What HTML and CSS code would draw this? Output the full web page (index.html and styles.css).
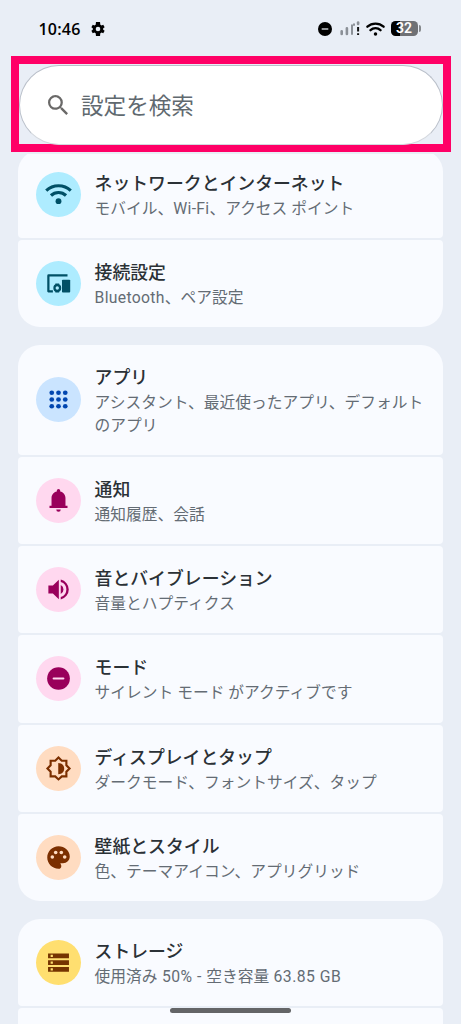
FILE: index.html
```html
<!DOCTYPE html>
<html lang="ja">
<head>
<meta charset="utf-8">
<title>設定</title>
<link rel="stylesheet" href="styles.css">
</head>
<body>
<div class="screen">
  <header class="top">
    <div class="status">
      <span class="clock">10:46</span>
      <svg class="gear" viewBox="2 2 20 20"><path fill-rule="evenodd" d="M19.4 13a7.500 7.500 0 0 0 0-2l2.100-1.650-2-3.460-2.500 1a7.300 7.300 0 0 0-1.700-.98L14.900 2H9.100l-.4 3.900c-.6.250-1.170.58-1.700.98l-2.500-1-2 3.470L4.600 11a7.500 7.500 0 0 0 0 2l-2.100 1.650 2 3.460 2.500-1c.53.4 1.100.73 1.700.98L9.100 22h5.800l.4-3.900c.6-.250 1.170-.58 1.700-.98l2.500 1 2-3.460zM12 15.300a3.300 3.300 0 1 1 0-6.600 3.300 3.300 0 0 1 0 6.600z"/></svg>
      <div class="indicators">
        <svg class="dnd" viewBox="0 0 14 14"><circle cx="7" cy="7" r="7"/><path d="M3.700 7h6.600" stroke="#dfe4ea" stroke-width="1.300"/></svg>
        <svg class="signal" viewBox="0 0 20 15"><g stroke="#8b9097" stroke-width="2.600" stroke-linecap="round"><path d="M1.700 10.200v2.800M6.900 7.200v5.800"/><path d="M12 4.200v8.800M14 3.300v.6" stroke-width="2"/><path d="M18.100 1.500v1.500"/></g><path d="M18.100 6v4.500M18.100 12.200v1.800" stroke="#111" stroke-width="2"/></svg>
        <svg class="wifi-small" viewBox="0 0 19 14"><g fill="none" stroke="#000" stroke-width="2.300" stroke-linecap="round"><path d="M1.400 4.700a12 12 0 0 1 16.200 0M4.500 8.200a7.300 7.300 0 0 1 10 0"/></g><circle cx="9.500" cy="12" r="1.750"/></svg>
        <div class="battery"><span class="level">32</span><i class="nub"></i></div>
      </div>
    </div>
    <div class="highlight">
      <div class="search">
        <svg class="search-icon" viewBox="3 3 17.500 17.500"><path d="M15.500 14h-.79l-.28-.27A6.470 6.470 0 0 0 16 9.500 6.500 6.500 0 1 0 9.500 16c1.610 0 3.090-.59 4.230-1.570l.27.28v.79l5 4.990L20.490 19l-4.990-5zm-6 0C7.010 14 5 11.990 5 9.500S7.010 5 9.500 5 14 7.010 14 9.500 11.990 14 9.500 14z"/></svg>
        <span>設定を検索</span>
      </div>
    </div>
  </header>

  <main class="list">
    <section class="group">
      <div class="row">
        <div class="badge cyan"><svg viewBox="0 0 24 24"><g fill="none" stroke="currentColor" stroke-width="2.800"><path d="M1.100 8.600a15.700 15.700 0 0 1 21.800 0M5.300 12.900a9.700 9.700 0 0 1 13.400 0"/></g><circle cx="12" cy="17.900" r="2.600"/></svg></div>
        <div class="text"><h2>ネットワークとインターネット</h2><p>モバイル、<span class="latin">Wi-Fi</span>、アクセス ポイント</p></div>
      </div>
      <div class="row">
        <div class="badge cyan"><svg viewBox="0 0 24 24"><path d="M20 4.800H3.200a.2.200 0 0 0-.2.200v13.900h4" fill="none" stroke="currentColor" stroke-width="2" stroke-linejoin="round"/><rect x="15.100" y="8.600" width="7.300" height="11.400" rx=".8"/><circle cx="10.900" cy="16" r="2.500" fill="none" stroke="currentColor" stroke-width="2"/><path d="M9.200 12h3.400v2H9.200zM9.200 18h3.400v2H9.200z"/></svg></div>
        <div class="text"><h2>接続設定</h2><p><span class="latin">Bluetooth</span>、ペア設定</p></div>
      </div>
    </section>

    <section class="group">
      <div class="row">
        <div class="badge blue"><svg viewBox="0 0 24 24"><circle cx="6" cy="6" r="2.100"/><circle cx="12" cy="6" r="2.100"/><circle cx="18" cy="6" r="2.100"/><circle cx="6" cy="12" r="2.100"/><circle cx="12" cy="12" r="2.100"/><circle cx="18" cy="12" r="2.100"/><circle cx="6" cy="18" r="2.100"/><circle cx="12" cy="18" r="2.100"/><circle cx="18" cy="18" r="2.100"/></svg></div>
        <div class="text"><h2>アプリ</h2><p>アシスタント、最近使ったアプリ、デフォルトのアプリ</p></div>
      </div>
      <div class="row">
        <div class="badge pink"><svg viewBox="0 0 24 24"><path d="M4 18.700v-2h1.800v-7c0-2.800 2-5.200 4.700-5.800v-.7a1.500 1.500 0 0 1 3 0v.7c2.700.6 4.700 3 4.700 5.800v7H20v2zM10 19.900h4a2 2 0 0 1-4 0z"/></svg></div>
        <div class="text"><h2>通知</h2><p>通知履歴、会話</p></div>
      </div>
      <div class="row">
        <div class="badge pink"><svg viewBox="0 0 24 24"><path d="M3 8.400v7.200h4l5.300 5V3.400L7 8.400zM14 16V8a4.500 4.500 0 0 1 0 8zM14 3.200v2.100a7 7 0 0 1 0 13.400v2.100a9 9 0 0 0 0-17.600z"/></svg></div>
        <div class="text"><h2>音とバイブレーション</h2><p>音量とハプティクス</p></div>
      </div>
      <div class="row">
        <div class="badge pink"><svg viewBox="0 0 24 24"><circle cx="12" cy="12" r="10.100"/><path d="M7.700 12h8.600" stroke="#ffd8ef" stroke-width="1.900" stroke-linecap="round"/></svg></div>
        <div class="text"><h2>モード</h2><p>サイレント モード がアクティブです</p></div>
      </div>
      <div class="row">
        <div class="badge orange"><svg viewBox="0 0 24 24"><path d="M12 2.300l2.900 2.800H19v4.100l2.800 2.800-2.800 2.800V19h-4.100L12 21.700 9.100 19H5v-4.200L2.200 12 5 9.200V5.100h4.100z" fill="none" stroke="currentColor" stroke-width="1.900"/><path d="M11.800 7c7 0 7 10 0 10z"/></svg></div>
        <div class="text"><h2>ディスプレイとタップ</h2><p>ダークモード、フォントサイズ、タップ</p></div>
      </div>
      <div class="row">
        <div class="badge orange"><svg viewBox="0 0 24 24"><path d="M12 2C6.490 2 2 6.490 2 12s4.490 10 10 10a2.500 2.500 0 0 0 2.500-2.500c0-.61-.23-1.200-.64-1.670a.49.49 0 0 1 .37-.83H16c3.310 0 6-2.690 6-6 0-4.960-4.490-9-10-9z"/><g class="holes"><circle cx="6.500" cy="11.500" r="1.600"/><circle cx="9.500" cy="7.500" r="1.600"/><circle cx="14.500" cy="7.500" r="1.600"/><circle cx="17.500" cy="11.500" r="1.600"/></g></svg></div>
        <div class="text"><h2>壁紙とスタイル</h2><p>色、テーマアイコン、アプリグリッド</p></div>
      </div>
    </section>

    <section class="group">
      <div class="row">
        <div class="badge yellow"><svg viewBox="0 0 24 24"><path d="M2.700 3.900h18.600v4.300H2.700zM2.700 9.900h18.600v4.300H2.700zM2.700 15.900h18.600v4.300H2.700z"/><path class="lights" d="M5 5.100h2v2H5zM5 11.100h2v2H5zM5 17.100h2v2H5z"/></svg></div>
        <div class="text"><h2>ストレージ</h2><p>使用済み<span class="latin figures"> 50% - </span>空き容量<span class="latin figures"> 63.85 GB</span></p></div>
      </div>
      <div class="row"></div>
    </section>
  </main>
  <div class="home-bar"></div>
</div>
</body>
</html>
```

FILE: styles.css
```css
* { box-sizing: border-box; }

body {
  margin: 0;
  background: #e9eef6;
  font-family: Roboto, "Noto Sans CJK JP", sans-serif;
  overflow: hidden;
}

h2, p { margin: 0; }
svg { display: block; flex: none; }

.screen {
  position: relative;
  height: 1024px;
  overflow: hidden;
}

.top {
  position: relative;
  z-index: 1;
  height: 154px;
  padding: 0 10.500px;
  background: #e9eef6;
}

.status {
  display: flex;
  align-items: center;
  height: 56px;
  padding: 1px 28px 0;
}

.clock {
  width: 42px;
  font: 600 16px/20px "Open Sans", Roboto, sans-serif;
  letter-spacing: 0.2px;
  color: #000;
  white-space: nowrap;
}

.gear { width: 14px; height: 14px; margin-left: 10.500px; }

.indicators {
  display: flex;
  align-items: center;
  margin: 0 2px 0 auto;
}

.dnd { width: 14px; height: 14px; }
.signal { width: 20px; height: 15px; margin-left: 8px; }
.wifi-small { width: 19px; height: 14px; margin-left: 6px; }

.battery {
  display: flex;
  align-items: center;
  gap: 1px;
  margin-left: 6px;
}

.level {
  width: 27px;
  height: 15px;
  border-radius: 4.500px;
  background: linear-gradient(90deg, #000 9px, #6f7175 9px);
  color: #fff;
  font: 600 14px/15.500px Roboto, sans-serif;
  text-align: center;
}

.nub {
  width: 2px;
  height: 7px;
  border-radius: 0 2px 2px 0;
  background: #85888c;
}

.highlight {
  height: 96px;
  border: 8px solid #ff0066;
}

.search {
  display: flex;
  align-items: center;
  height: 80px;
  margin-top: 1px;
  padding-left: 28.500px;
  border: 1px solid #b9bfc9;
  border-bottom-color: #d4d8de;
  border-radius: 41px;
  background: #fff;
  color: #60696f;
  font-size: 22.600px;
  line-height: 34px;
}

.search span { padding-top: 3px; }

.search-icon {
  width: 20px;
  height: 20px;
  margin: 0 13px 0 0;
  fill: #6a6968;
}

.list {
  display: flex;
  flex-direction: column;
  gap: 18px;
  margin-top: -3.600px;
  padding: 0 18px;
}

.group {
  display: flex;
  flex-direction: column;
  gap: 2px;
  border-radius: 22px;
  overflow: hidden;
}

.row {
  display: flex;
  align-items: center;
  gap: 13.600px;
  min-height: 87.200px;
  padding: 18.600px 18px;
  border-radius: 4px;
  background: #f9fbff;
}

.badge {
  flex: none;
  width: 45px;
  height: 45px;
  padding: 9px;
  border-radius: 50%;
}

.badge svg { width: 27px; height: 27px; fill: currentColor; }

.cyan { background: #aeecff; color: #005066; }
.blue { background: #cae4ff; color: #0146b0; }
.pink { background: #ffd8ef; color: #99005b; }
.orange { background: #ffdcc1; color: #7b2f00; }
.yellow { background: #ffdf70; color: #753400; }
.badge .holes { fill: #ffdcc1; }
.badge .lights { fill: #ffdf70; }

.text {
  flex: 1;
  margin: 0.500px -10px -0.500px 0;
}

.text h2 {
  font-size: 17.850px;
  line-height: 27px;
  font-weight: 500;
  color: #2b3136;
}

.text p {
  font-size: 15.740px;
  line-height: 23px;
  color: #646c74;
}

.latin { letter-spacing: 0.3px; }
.figures { letter-spacing: 0.48px; }

.home-bar {
  position: absolute;
  z-index: 2;
  left: 170px;
  top: 1008px;
  width: 121px;
  height: 5px;
  border-radius: 3px;
  background: #646567;
}
```
